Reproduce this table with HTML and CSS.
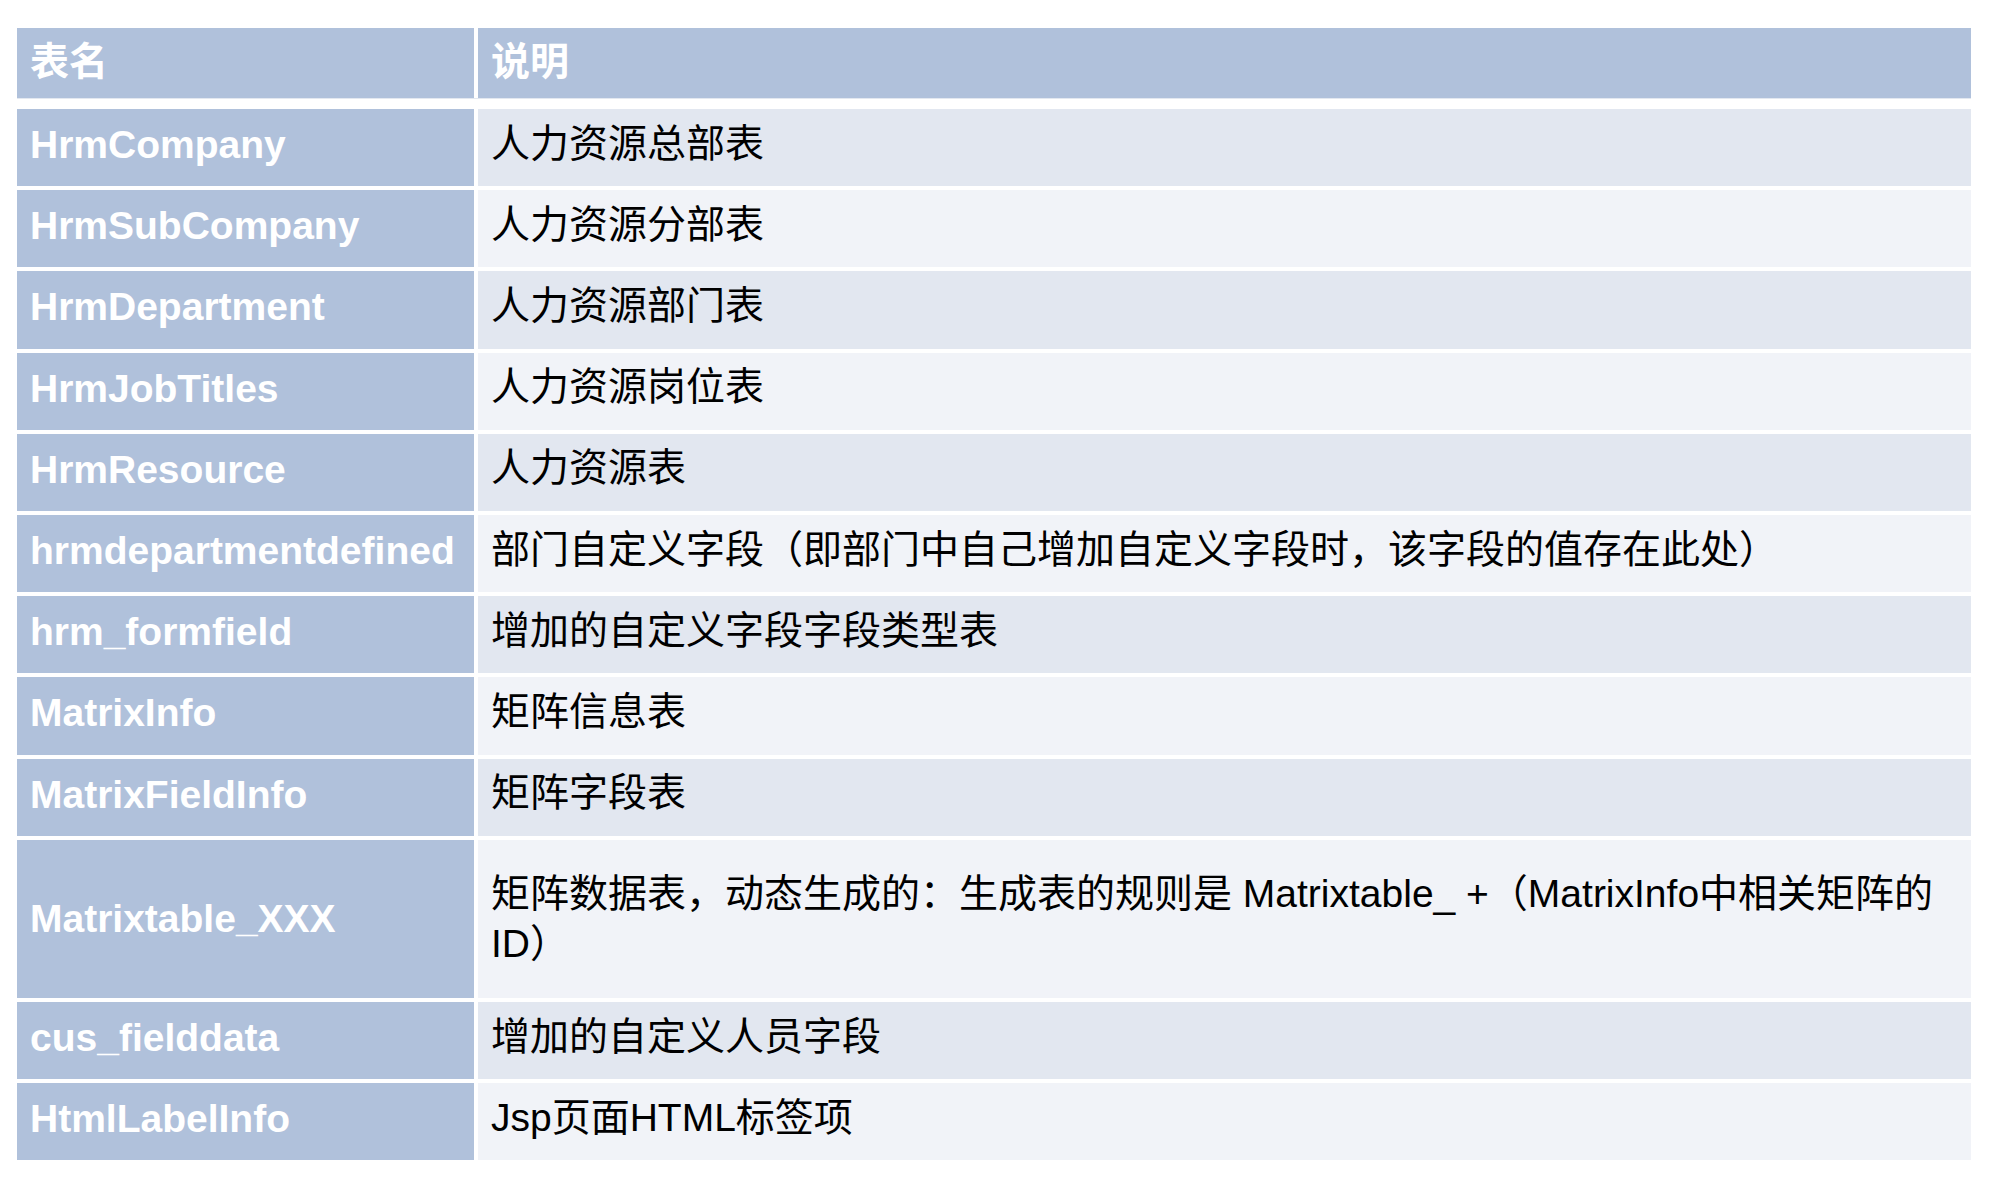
FILE: index.html
```html
<!DOCTYPE html>
<html lang="zh-CN">
<head>
<meta charset="utf-8">
<title>表名说明</title>
<link rel="stylesheet" href="styles.css">
</head>
<body>
<div class="sheet">
  <div class="head">
    <div class="cell name">表名</div>
    <div class="cell hdesc">说明</div>
  </div>
  <div class="body">
    <div class="cell name">HrmCompany</div>
    <div class="cell desc band1">人力资源总部表</div>

    <div class="cell name">HrmSubCompany</div>
    <div class="cell desc band2">人力资源分部表</div>

    <div class="cell name">HrmDepartment</div>
    <div class="cell desc band1">人力资源部门表</div>

    <div class="cell name">HrmJobTitles</div>
    <div class="cell desc band2">人力资源岗位表</div>

    <div class="cell name">HrmResource</div>
    <div class="cell desc band1">人力资源表</div>

    <div class="cell name">hrmdepartmentdefined</div>
    <div class="cell desc band2">部门自定义字段（即部门中自己增加自定义字段时，该字段的值存在此处）</div>

    <div class="cell name">hrm_formfield</div>
    <div class="cell desc band1">增加的自定义字段字段类型表</div>

    <div class="cell name">MatrixInfo</div>
    <div class="cell desc band2">矩阵信息表</div>

    <div class="cell name">MatrixFieldInfo</div>
    <div class="cell desc band1">矩阵字段表</div>

    <div class="cell name tall">Matrixtable_XXX</div>
    <div class="cell desc band2 tall"><p class="wrap">矩阵数据表，动态生成的：生成表的规则是 Matrixtable_ +（MatrixInfo中相关矩阵的<br>ID）</p></div>

    <div class="cell name">cus_fielddata</div>
    <div class="cell desc band1">增加的自定义人员字段</div>

    <div class="cell name">HtmlLabelInfo</div>
    <div class="cell desc band2">Jsp页面HTML标签项</div>
  </div>
</div>
</body>
</html>
```

FILE: styles.css
```css
html, body {
  margin: 0;
  padding: 0;
  background: #ffffff;
}

.sheet {
  width: 1954px;
  margin: 28px 0 0 17px;
  font-family: "Liberation Sans", "Noto Sans CJK SC", sans-serif;
  font-size: 39px;
}

.head,
.body {
  display: grid;
  grid-template-columns: 457px 1493px;
  column-gap: 4px;
}

.head {
  height: 70px;
  box-shadow: 0 1px 0 #e3e8f0;
}

.body {
  margin-top: 11px;
  grid-auto-rows: 77.2px;
  row-gap: 4px;
}

.cell {
  display: flex;
  align-items: center;
  padding: 0 13px 5px;
  box-sizing: border-box;
  white-space: nowrap;
  line-height: 50px;
}

.head .cell {
  padding-bottom: 3px;
}

.name {
  background: #b0c1db;
  color: #ffffff;
  font-weight: 700;
}

.hdesc {
  background: #b0c1db;
  color: #ffffff;
  font-weight: 700;
}

.desc {
  color: #000000;
  font-weight: 400;
  padding-bottom: 8px;
}

.band1 {
  background: #e2e7f0;
}

.band2 {
  background: #f1f3f8;
}

.tall {
  grid-row: span 2;
  padding-bottom: 0;
}

.wrap {
  margin: 0;
  line-height: 50px;
}
```
